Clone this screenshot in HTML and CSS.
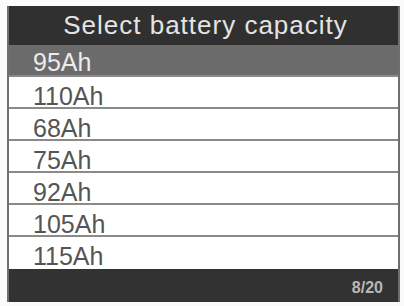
FILE: index.html
```html
<!DOCTYPE html>
<html>
<head>
<meta charset="utf-8">
<link rel="stylesheet" href="styles.css">
</head>
<body>
<div class="screen">
  <div class="header">Select battery capacity</div>
  <ul class="list">
    <li class="item selected">95Ah</li>
    <li class="item">110Ah</li>
    <li class="item">68Ah</li>
    <li class="item">75Ah</li>
    <li class="item">92Ah</li>
    <li class="item">105Ah</li>
    <li class="item">115Ah</li>
  </ul>
  <div class="footer"><span class="page">8/20</span></div>
</div>
</body>
</html>
```
FILE: styles.css
```css
html, body {
  margin: 0;
  padding: 0;
  background: #fbfbfb;
}
body {
  font-family: "Liberation Sans", Arial, sans-serif;
  padding: 6px 0 0 7px;
}
.screen {
  width: 389px;
  border-left: 2px solid #6e6e6e;
  border-right: 2px solid #6e6e6e;
  background: #fff;
  display: flex;
  flex-direction: column;
}
.header {
  height: 39px;
  background: #303030;
  color: #e4e4e4;
  font-size: 26px;
  letter-spacing: 1px;
  display: flex;
  align-items: center;
  justify-content: center;
  padding-left: 4px;
}
.list {
  list-style: none;
  margin: 0;
  padding: 0;
}
.item {
  box-sizing: border-box;
  height: 32px;
  border-bottom: 2px solid #8a8a8a;
  font-size: 25px;
  line-height: 22px;
  padding: 8px 0 0 24px;
  color: #555;
}
.item.selected {
  background: #6b6b6b;
  color: #ececec;
  padding-top: 6px;
}
.item:last-child {
  border-bottom: none;
}
.footer {
  height: 33px;
  background: #323232;
  display: flex;
  align-items: center;
  justify-content: flex-end;
  padding-right: 15px;
}
.page {
  color: #b8b8b8;
  font-size: 16px;
  font-weight: bold;
  padding-top: 5px;
}
```
